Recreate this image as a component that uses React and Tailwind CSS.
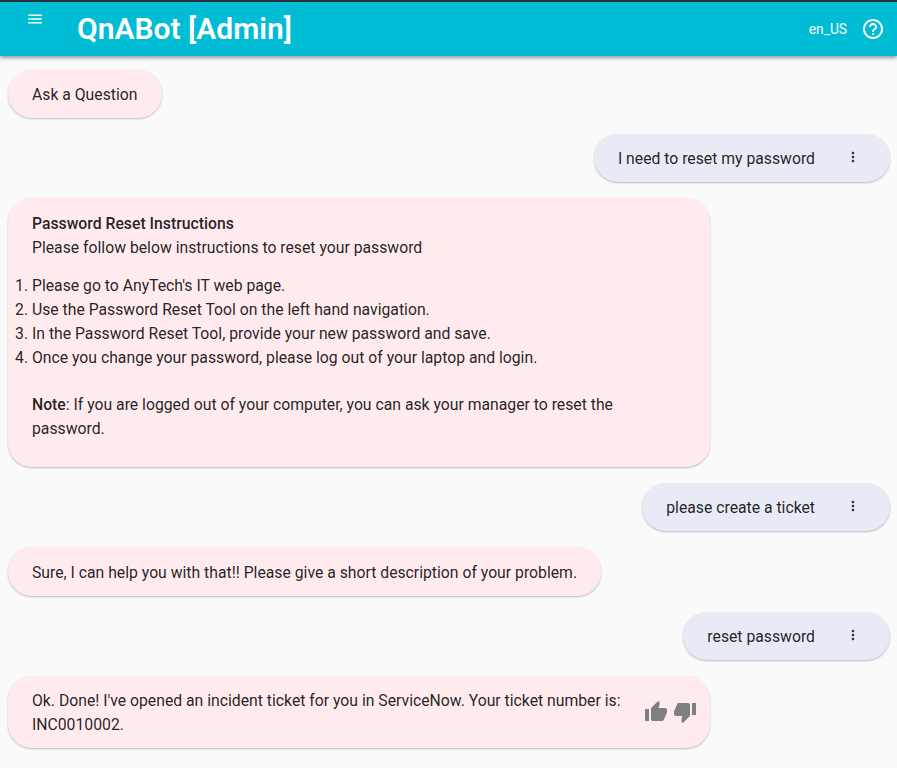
const THUMB_UP = "M1 21h4V9H1v12zm22-11c0-1.1-.9-2-2-2h-6.31l.95-4.57.03-.32c0-.41-.17-.79-.44-1.06L14.17 1 7.59 7.59C7.22 7.95 7 8.45 7 9v10c0 1.1.9 2 2 2h9c.83 0 1.54-.5 1.84-1.22l3.02-7.05c.09-.23.14-.47.14-.73v-2z";
const THUMB_DOWN = "M15 3H6c-.83 0-1.54.5-1.84 1.22l-3.02 7.05c-.09.23-.14.47-.14.73v2c0 1.1.9 2 2 2h6.31l-.95 4.57-.03.32c0 .41.17.79.44 1.06L9.83 23l6.59-6.59c.36-.36.58-.86.58-1.41V5c0-1.1-.9-2-2-2zm4 0v12h4V3h-4z";
const HELP = "M11 18h2v-2h-2v2zm1-16C6.48 2 2 6.48 2 12s4.48 10 10 10 10-4.48 10-10S17.52 2 12 2zm0 18c-4.41 0-8-3.59-8-8s3.59-8 8-8 8 3.59 8 8-3.59 8-8 8zm0-14c-2.21 0-4 1.79-4 4h2c0-1.1.9-2 2-2s2 .9 2 2c0 2-3 1.75-3 5h2c0-2.25 3-2.5 3-5 0-2.21-1.79-4-4-4z";
const MENU = "M3 18h18v-2H3v2zm0-5h18v-2H3v2zm0-7v2h18V6H3z";
const DOTS = "M12 8c1.1 0 2-.9 2-2s-.9-2-2-2-2 .9-2 2 .9 2 2 2zm0 2c-1.1 0-2 .9-2 2s.9 2 2 2 2-.9 2-2-.9-2-2-2zm0 6c-1.1 0-2 .9-2 2s.9 2 2 2 2-.9 2-2-.9-2-2-2z";

function Icon({ d, className }) {
  return (
    <svg viewBox="0 0 24 24" className={className} fill="currentColor">
      <path d={d} />
    </svg>
  );
}

function Bot({ children, className = "pb-[11px] pt-[13px]" }) {
  return (
    <div className={`self-start rounded-[24px] bg-[#ffebee] pl-6 pr-6 shadow-[0_1px_2px_rgba(0,0,0,0.25)] ${className}`}>
      {children}
    </div>
  );
}

function Human({ text }) {
  return (
    <div className="flex h-12 items-center self-end rounded-[24px] bg-[#e8eaf6] pl-6 pr-[29px] shadow-[0_1px_2px_rgba(0,0,0,0.25)]">
      <span className="pt-px">{text}</span>
      <Icon d={DOTS} className="mb-0.5 ml-[30px] h-4 w-4 text-[#333333]" />
    </div>
  );
}

const STEPS = [
  "Please go to AnyTech's IT web page.",
  "Use the Password Reset Tool on the left hand navigation.",
  "In the Password Reset Tool, provide your new password and save.",
  "Once you change your password, please log out of your laptop and login.",
];

export default function App() {
  return (
    <div className="h-[768px] overflow-hidden bg-[#fafafa] font-['Roboto',sans-serif] text-[15.75px] leading-6 text-[#000000de]">
      <header className="relative z-10 flex h-14 items-center border-t-2 border-[#263238] bg-[#00bcd4] pr-3 text-white shadow-[0_2px_4px_rgba(0,0,0,0.4)]">
        <Icon d={MENU} className="mb-5 ml-[26px] h-[18px] w-[18px]" />
        <h1 className="ml-[33px] text-[30px] font-semibold leading-9">QnABot [Admin]</h1>
        <span className="ml-auto text-[13.75px]">en_US</span>
        <Icon d={HELP} className="ml-[14px] h-6 w-6" />
      </header>

      <main className="flex flex-col gap-4 pb-4 pl-2 pr-[7px] pt-3.5">
        <Bot className="w-[154px] pb-[11px] pt-[13px]">Ask a Question</Bot>
        <Human text="I need to reset my password" />
        <Bot className="w-[702px] pb-2.5 pt-3.5">
          <p className="font-medium">Password Reset Instructions</p>
          <p>Please follow below instructions to reset your password</p>
          <ol className="mt-3.5 list-decimal">
            {STEPS.map((step) => (
              <li key={step}>{step}</li>
            ))}
          </ol>
          <p className="mb-4 mt-[23px]">
            <strong className="font-medium">Note</strong>: If you are logged out of your computer, you can ask your manager to reset the password.
          </p>
        </Bot>
        <Human text="please create a ticket" />
        <Bot className="pb-[11px] pt-3.5">Sure, I can help you with that!! Please give a short description of your problem.</Bot>
        <Human text="reset password" />
        <Bot className="w-[702px] pb-[11px] pt-[13px]">
          <div className="flex items-center">
            <p className="flex-1">Ok. Done! I've opened an incident ticket for you in ServiceNow. Your ticket number is: INC0010002.</p>
            <div className="-mr-[11px] -mt-0.5 flex gap-[5px] text-[#7f7f7f]">
              <Icon d={THUMB_UP} className="h-6 w-6" />
              <Icon d={THUMB_DOWN} className="h-6 w-6" />
            </div>
          </div>
        </Bot>
      </main>
    </div>
  );
}
